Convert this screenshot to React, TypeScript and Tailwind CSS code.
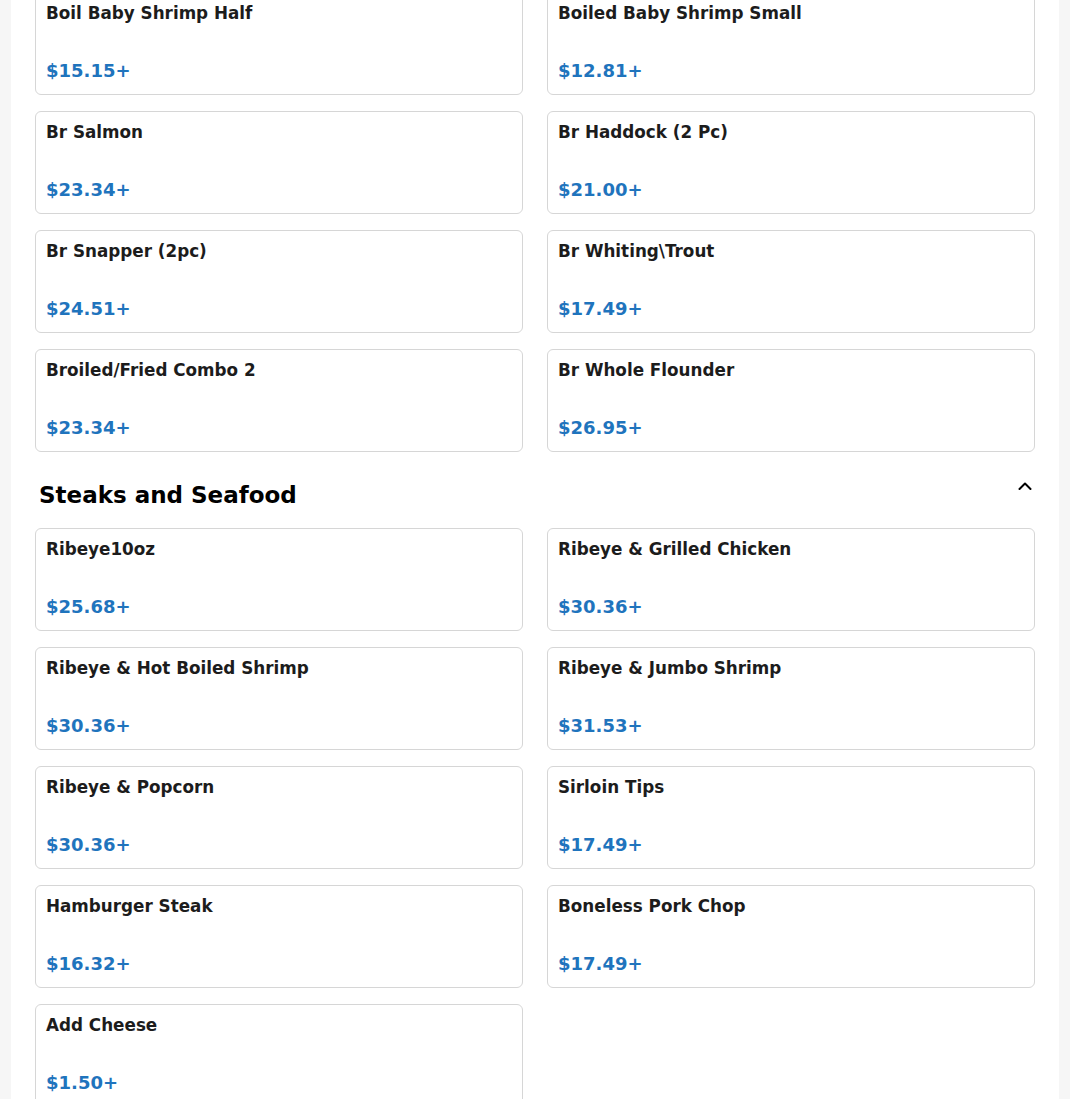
interface Item {
    name: string;
    price: string;
}

const seafood: Item[] = [
    { name: "Boil Baby Shrimp Half", price: "$15.15+" },
    { name: "Boiled Baby Shrimp Small", price: "$12.81+" },
    { name: "Br Salmon", price: "$23.34+" },
    { name: "Br Haddock (2 Pc)", price: "$21.00+" },
    { name: "Br Snapper (2pc)", price: "$24.51+" },
    { name: "Br Whiting\\Trout", price: "$17.49+" },
    { name: "Broiled/Fried Combo 2", price: "$23.34+" },
    { name: "Br Whole Flounder", price: "$26.95+" },
];

const steaks: Item[] = [
    { name: "Ribeye10oz", price: "$25.68+" },
    { name: "Ribeye & Grilled Chicken", price: "$30.36+" },
    { name: "Ribeye & Hot Boiled Shrimp", price: "$30.36+" },
    { name: "Ribeye & Jumbo Shrimp", price: "$31.53+" },
    { name: "Ribeye & Popcorn", price: "$30.36+" },
    { name: "Sirloin Tips", price: "$17.49+" },
    { name: "Hamburger Steak", price: "$16.32+" },
    { name: "Boneless Pork Chop", price: "$17.49+" },
    { name: "Add Cheese", price: "$1.50+" },
];

function Card({ item }: { item: Item }) {
    return (
        <div className="border border-[#d6d6d6] rounded-md bg-white px-[10px] pt-2 pb-[7px] h-[103px] flex flex-col">
            <p className="text-[16.8px] leading-6 font-bold text-[#1c1c1c] h-[56px]">{item.name}</p>
            <p className="text-lg leading-7 font-bold text-[#1f74bd]">{item.price}</p>
        </div>
    );
}

export default function App() {
    return (
        <div className="bg-[#f6f6f6] h-[1099px] overflow-hidden font-['DejaVu_Sans',sans-serif]">
            <div className="mx-[11px] bg-white h-[1120px] px-6 -mt-2">
                {/* SEAFOOD LIST (scrolled) */}
                <div className="grid grid-cols-2 gap-x-6 gap-y-4">
                    {seafood.map((item) => (
                        <Card key={item.name} item={item} />
                    ))}
                </div>

                {/* STEAKS */}
                <div className="flex justify-between items-start mt-[27px] mb-[17px] pl-1 pr-[3px]">
                    <h2 className="text-[23px] leading-8 font-bold text-black">Steaks and Seafood</h2>
                    <svg width="14" height="8" viewBox="0 0 14 8" className="mt-[3px]" fill="none" stroke="black" strokeWidth="2" strokeLinecap="round" strokeLinejoin="round">
                        <polyline points="1.5,7 7,1.5 12.5,7" />
                    </svg>
                </div>
                <div className="grid grid-cols-2 gap-x-6 gap-y-4">
                    {steaks.map((item) => (
                        <Card key={item.name} item={item} />
                    ))}
                </div>
            </div>
        </div>
    );
}
